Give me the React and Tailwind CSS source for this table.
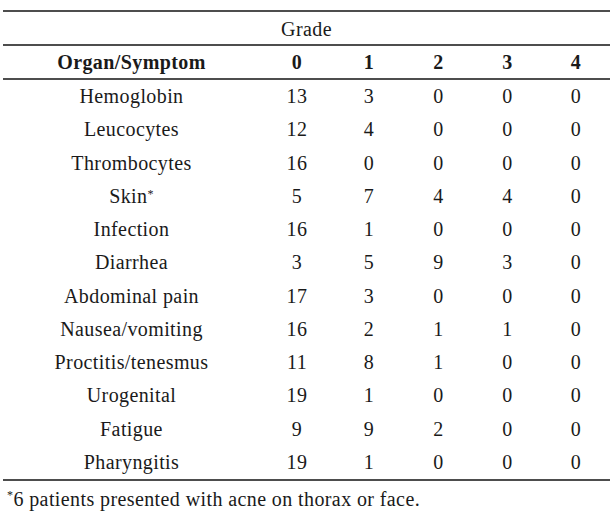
import React from 'react';

const rows = [
  ['Hemoglobin', 13, 3, 0, 0, 0],
  ['Leucocytes', 12, 4, 0, 0, 0],
  ['Thrombocytes', 16, 0, 0, 0, 0],
  ['Skin', 5, 7, 4, 4, 0],
  ['Infection', 16, 1, 0, 0, 0],
  ['Diarrhea', 3, 5, 9, 3, 0],
  ['Abdominal pain', 17, 3, 0, 0, 0],
  ['Nausea/vomiting', 16, 2, 1, 1, 0],
  ['Proctitis/tenesmus', 11, 8, 1, 0, 0],
  ['Urogenital', 19, 1, 0, 0, 0],
  ['Fatigue', 9, 9, 2, 0, 0],
  ['Pharyngitis', 19, 1, 0, 0, 0],
];

const cols = 'grid grid-cols-[257px_74px_70px_69px_69px_68px] text-center';

const Rule = () => <div className="h-[2px] bg-[#4d4d4d]" />;

export default function App() {
  return (
    <div className="w-[615px] h-[517px] bg-white text-[#1a1a1a] text-[20px] tracking-[0.4px] font-['Liberation_Serif','Times_New_Roman',serif] overflow-hidden">
      <div className="ml-[3px] w-[607px] pt-[10px]">
        <Rule />
        <div className="h-[32px] leading-[35px] text-center">Grade</div>
        <Rule />
        <div className={`${cols} h-[32px] leading-[32px] font-bold`}>
          <div>Organ/Symptom</div>
          <div>0</div>
          <div>1</div>
          <div>2</div>
          <div>3</div>
          <div>4</div>
        </div>
        <Rule />
        {rows.map((r) => (
          <div key={r[0]} className={`${cols} h-[33.25px] leading-[33.25px]`}>
            <div>
              {r[0]}
              {r[0] === 'Skin' && <span className="text-[12px] leading-none align-[5px]">*</span>}
            </div>
            {r.slice(1).map((v, i) => (
              <div key={i}>{v}</div>
            ))}
          </div>
        ))}
        <Rule />
        <div className="h-[33px] leading-[37px] pl-[4px]">
          <span className="text-[12px] leading-none align-[7px]">*</span>6 patients presented with acne on thorax or face.
        </div>
      </div>
    </div>
  );
}
